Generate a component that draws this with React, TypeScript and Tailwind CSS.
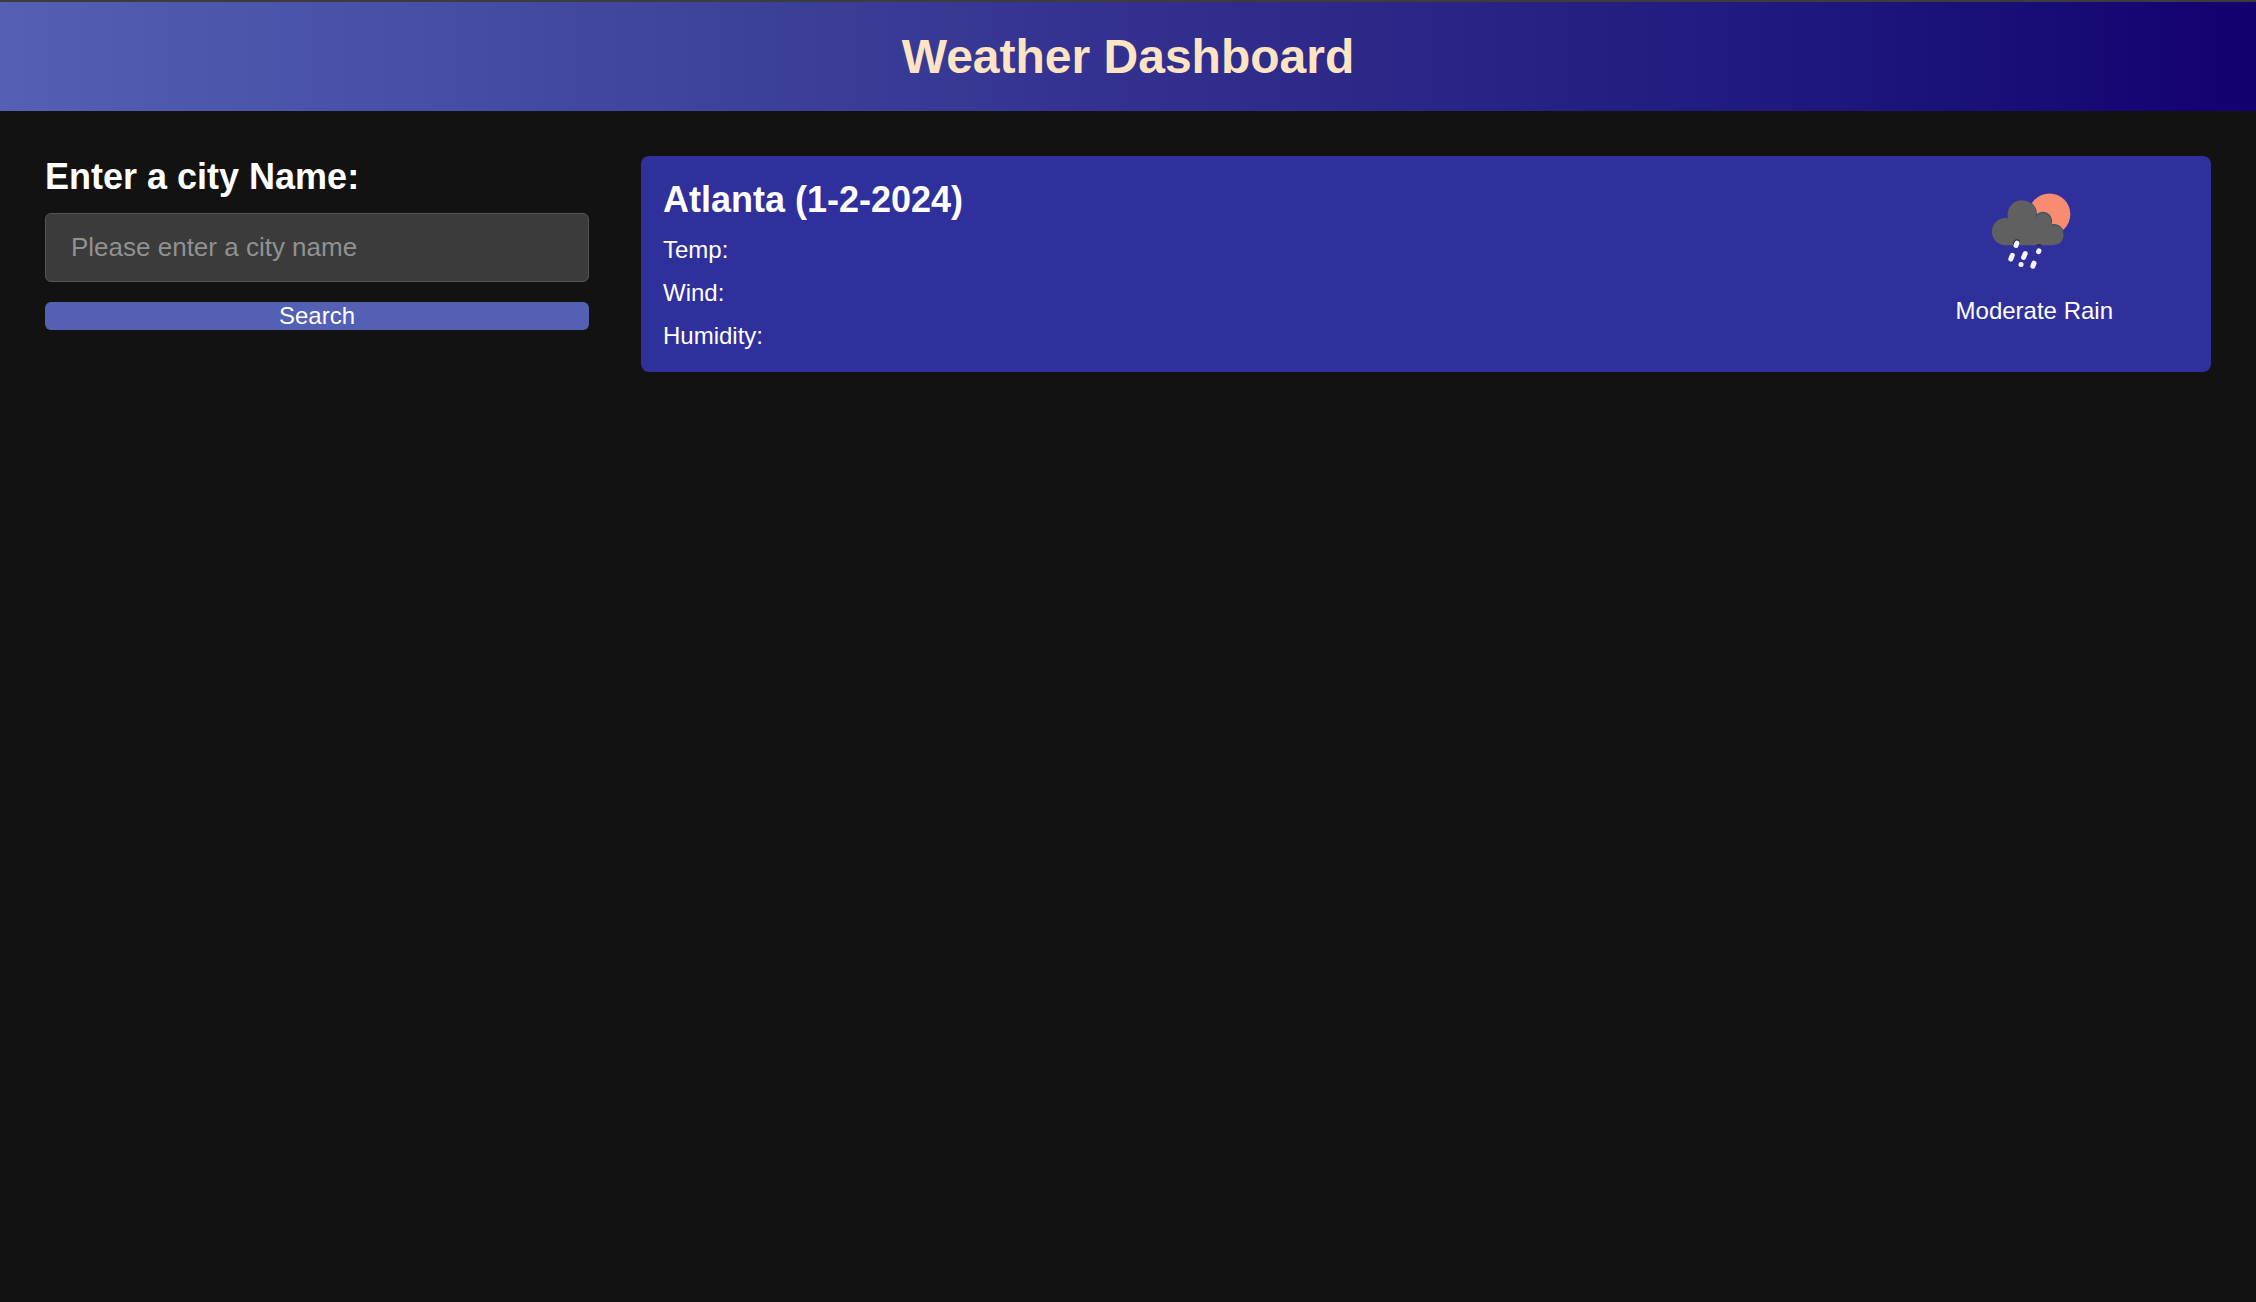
import React from "react";

function RainIcon() {
  return (
    <svg viewBox="-1 0 100 100" className="size-[100px]" role="img" aria-label="Rain with sun">
      <circle cx="64.5" cy="34.2" r="20.8" fill="#f78c73" />
      <g fill="none" stroke="#3d5663" strokeWidth="2.4">
        <circle cx="36.8" cy="34.5" r="14" clipPath="url(#sun)" />
        <circle cx="58" cy="41" r="8" clipPath="url(#sun)" />
        <circle cx="68.5" cy="55" r="9.8" clipPath="url(#sun)" />
      </g>
      <clipPath id="sun">
        <circle cx="64.5" cy="34.2" r="20.8" />
      </clipPath>
      <g fill="#606060">
        <circle cx="36.8" cy="34.5" r="14.2" />
        <circle cx="20.5" cy="51.6" r="13.6" />
        <circle cx="58" cy="41" r="7.8" />
        <circle cx="68.8" cy="55.2" r="9.8" />
        <path d="M20 65.2h49V52l-4-14H42L20 44z" />
      </g>
      <g stroke="#222838" strokeWidth="6" strokeLinecap="round">
        <path d="M31.8 62.3l-.6 1.4" />
        <path d="M52 65h3.6" strokeWidth="1.4" />
      </g>
      <g stroke="#f5f5fc" strokeWidth="5" strokeLinecap="round">
        <path d="M31.9 63.2l-.9 2.3" />
        <path d="M27.3 75.4l-1.5 3.6" />
        <path d="M40.2 73.6l-1.6 3.8" />
        <path d="M53.9 70.9l-.3 .8" />
        <path d="M36 84.5h.1" />
        <path d="M49 83.2l-1.2 3" />
      </g>
    </svg>
  );
}

export default function App() {
  return (
    <div className="min-h-screen bg-[#121212] font-['Liberation_Sans',Arial,sans-serif] text-2xl text-white">
      <header className="border-t-2 border-[#3c3c3c] bg-linear-to-r from-[#5360b3] via-[#33308f] to-[#130070] px-6 py-7">
        <h1 className="text-center text-[48px] leading-[53px] font-bold text-[#ffe4c4]">Weather Dashboard</h1>
      </header>
      <main className="grid grid-cols-[544fr_1570fr] items-start gap-[52px] p-[45px]">
        <form className="flex flex-col" onSubmit={(e) => e.preventDefault()}>
          <label htmlFor="city" className="mb-4 text-4xl font-bold">
            <h2 className="leading-[41px]">Enter a city Name:</h2>
          </label>
          <input
            id="city"
            type="text"
            placeholder="Please enter a city name"
            className="mb-5 h-[69px] w-full rounded-[6px] border border-[#555555] bg-[#3b3b3b] px-[25px] text-[26px] text-white outline-none placeholder:text-[#919191]"
          />
          <button type="submit" className="rounded-[6px] bg-[#5360b3] text-2xl leading-[28px]">
            Search
          </button>
        </form>
        <section className="flex items-start justify-between rounded-lg bg-[#30309c] pt-[21px] pr-[98px] pb-[22px] pl-[22px]">
          <div>
            <h2 className="mb-[13px] text-4xl leading-[45px] font-bold">Atlanta (1-2-2024)</h2>
            <div className="flex flex-col gap-[14px] leading-[29px]">
              <p>Temp:</p>
              <p>Wind:</p>
              <p>Humidity:</p>
            </div>
          </div>
          <figure className="flex flex-col items-center gap-4 pt-[3px]">
            <RainIcon />
            <figcaption className="leading-[29px]">Moderate Rain</figcaption>
          </figure>
        </section>
      </main>
    </div>
  );
}
